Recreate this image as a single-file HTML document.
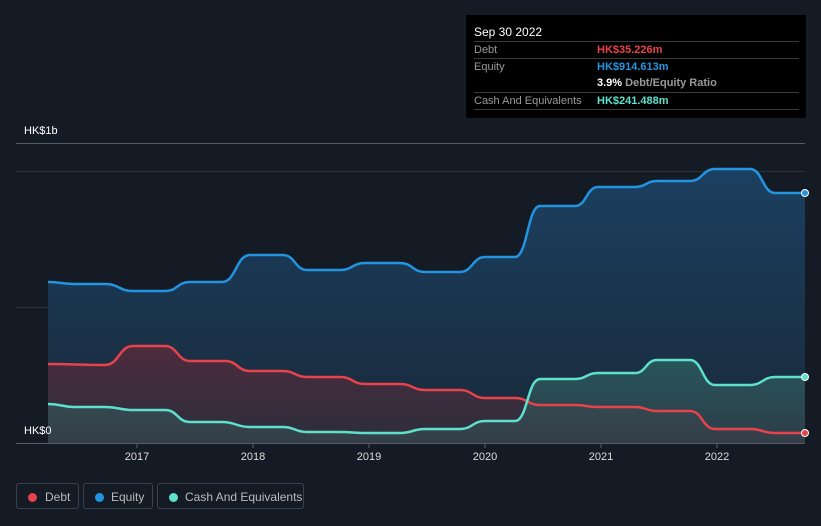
<!DOCTYPE html>
<html><head><meta charset="utf-8"><style>
body{margin:0;width:821px;height:526px;background:#151b25;font-family:"Liberation Sans",sans-serif;overflow:hidden;position:relative}
.tt{position:absolute;left:466px;top:15px;width:340px;height:103px;background:#000;color:#fff;font-size:11px}
.tt .h{position:absolute;left:8px;top:10px;font-size:12px}
.row{position:absolute;left:8px;width:325px;height:17px;border-top:1px solid #3a3a3a}
.row span{position:absolute;top:2px}
.l{left:0;color:#999}.v{left:123px;font-weight:bold}
.lbl{position:absolute;color:#fff;font-size:11px}
.leg{position:absolute;top:483px;height:26px;border:1px solid #3a414c;border-radius:3px;color:#bbb;font-size:12px;line-height:26px;box-sizing:border-box}
.leg i{position:absolute;top:9px;left:11px;width:9px;height:9px;border-radius:50%}
</style></head><body>
<svg width="821" height="526" style="position:absolute;left:0;top:0">
<defs>
<linearGradient id="ge" x1="0" y1="0" x2="0" y2="1"><stop offset="0" stop-color="#1c4468" stop-opacity=".9"/><stop offset="1" stop-color="#1a2d40" stop-opacity=".8"/></linearGradient>
<linearGradient id="gd" x1="0" y1="0" x2="0" y2="1"><stop offset="0" stop-color="#5a2a3a" stop-opacity=".8"/><stop offset="1" stop-color="#3a2f3c" stop-opacity=".6"/></linearGradient>
<linearGradient id="gc" x1="0" y1="0" x2="0" y2="1"><stop offset="0" stop-color="#2a6060" stop-opacity=".8"/><stop offset="1" stop-color="#3a4a52" stop-opacity=".6"/></linearGradient>
</defs>
<line x1="16" y1="143.5" x2="805" y2="143.5" stroke="#555b63"/>
<line x1="16" y1="171.5" x2="805" y2="171.5" stroke="#2b323c"/>
<line x1="16" y1="307.5" x2="805" y2="307.5" stroke="#2b323c"/>
<g id="g"></g>
<line x1="16" y1="443.5" x2="805" y2="443.5" stroke="#555b63"/>
<g stroke="#555b63"><line x1="137" y1="443" x2="137" y2="448"/><line x1="253" y1="443" x2="253" y2="448"/><line x1="369" y1="443" x2="369" y2="448"/><line x1="485" y1="443" x2="485" y2="448"/><line x1="601" y1="443" x2="601" y2="448"/><line x1="717" y1="443" x2="717" y2="448"/></g>
<g fill="#ddd" font-size="11" text-anchor="middle" font-family="Liberation Sans"><text x="137" y="460">2017</text><text x="253" y="460">2018</text><text x="369" y="460">2019</text><text x="485" y="460">2020</text><text x="601" y="460">2021</text><text x="717" y="460">2022</text></g>
</svg>
<div class="lbl" style="left:24px;top:125px">HK$1b</div>
<div class="lbl" style="left:24px;top:425px">HK$0</div>
<div class="tt"><div class="h">Sep 30 2022</div>
<div class="row" style="top:26px"><span class="l">Debt</span><span class="v" style="color:#e8424a">HK$35.226m</span></div>
<div class="row" style="top:43px"><span class="l">Equity</span><span class="v" style="color:#2394e0">HK$914.613m</span></div>
<div class="row" style="top:60px;border-top:none"><span class="v" style="color:#fff">3.9% <b style="color:#999">Debt/Equity Ratio</b></span></div>
<div class="row" style="top:77px"><span class="l">Cash And Equivalents</span><span class="v" style="color:#5ee0cc">HK$241.488m</span></div>
<div class="row" style="top:94px;height:0"></div>
</div>
<div class="leg" style="left:16px;width:63px"><i style="background:#e8424a"></i><span style="position:absolute;left:28px">Debt</span></div>
<div class="leg" style="left:83px;width:70px"><i style="background:#2394e0"></i><span style="position:absolute;left:27px">Equity</span></div>
<div class="leg" style="left:157px;width:147px"><i style="background:#5ee0cc"></i><span style="position:absolute;left:27px">Cash And Equivalents</span></div>
<script>
var E=[[48,282],[75,284],[105,284],[133,291],[165,291],[190,282],[222,282],[250,255],[283,255],[307,270],[340,270],[365,263],[400,263],[425,272],[460,272],[485,257],[515,257],[540,206],[575,206],[598,187],[635,187],[657,181],[690,181],[715,169],[750,169],[775,193],[805,193]];
var D=[[48,364],[105,365],[133,346],[165,346],[190,361],[225,361],[250,371],[283,371],[307,377],[340,377],[365,384],[400,384],[425,390],[460,390],[485,398],[515,398],[540,405],[575,405],[598,407],[635,407],[657,411],[690,411],[715,429],[750,429],[775,433],[805,433]];
var C=[[48,404],[75,407],[105,407],[133,410],[165,410],[190,422],[222,422],[250,427],[283,427],[307,432],[340,432],[365,433],[400,433],[425,429],[460,429],[485,421],[515,421],[540,379],[575,379],[598,373],[635,373],[657,360],[690,360],[715,385],[750,385],[775,377],[805,377]];
function p(a){var s="M"+a[0][0]+","+a[0][1];for(var i=1;i<a.length;i++){var m=(a[i-1][0]+a[i][0])/2;s+=" C"+m+","+a[i-1][1]+" "+m+","+a[i][1]+" "+a[i][0]+","+a[i][1];}return s;}
var h="";
[[E,"url(#ge)","#2394e0"],[D,"url(#gd)","#e8424a"],[C,"url(#gc)","#5ee0cc"]].forEach(function(x){var d=p(x[0]);h+='<path d="'+d+' L805,443 L48,443Z" fill="'+x[1]+'"/>';});
[[E,"#2394e0"],[D,"#e8424a"],[C,"#5ee0cc"]].forEach(function(x){h+='<path d="'+p(x[0])+'" fill="none" stroke="'+x[1]+'" stroke-width="2.5"/>';var l=x[0][x[0].length-1];h+='<circle cx="'+l[0]+'" cy="'+l[1]+'" r="3.5" fill="'+x[1]+'" stroke="#fff" stroke-width="1"/>';});
document.getElementById("g").innerHTML=h;
</script>
</body></html>
